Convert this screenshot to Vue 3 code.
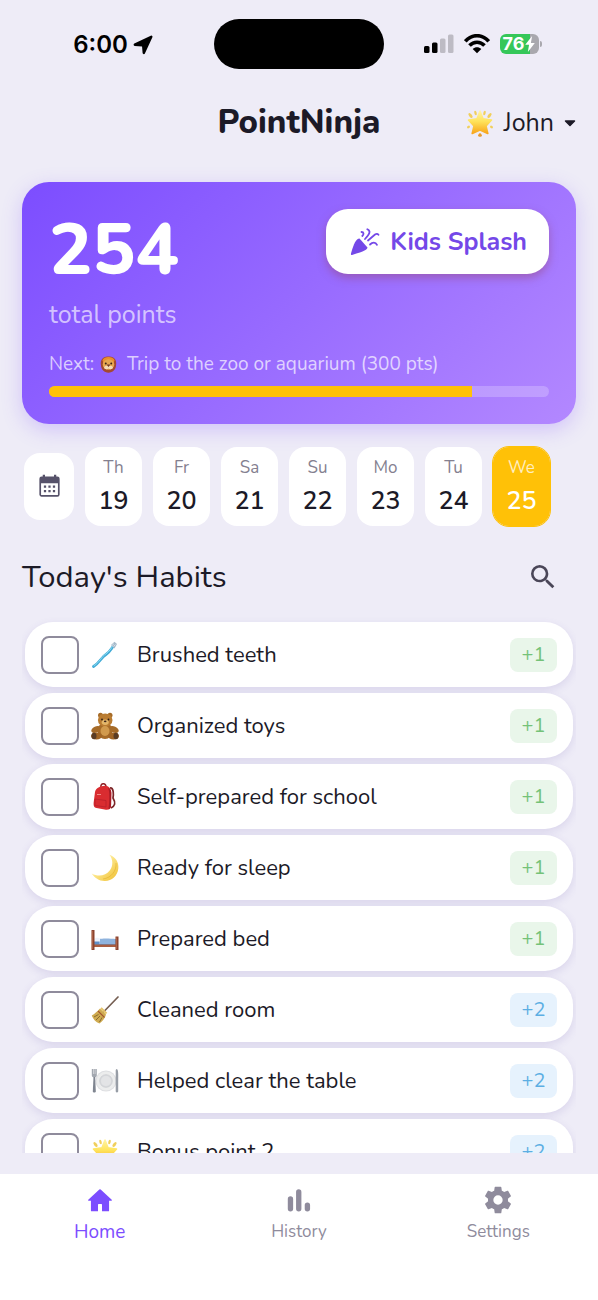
<template>
  <div class="app-screen">
    <svg class="icon-defs" aria-hidden="true">
      <defs>
        <linearGradient id="star-fill" x1="0" y1="0" x2="0" y2="1">
          <stop offset="0" stop-color="#fff3a6" />
          <stop offset="0.45" stop-color="#ffe45c" />
          <stop offset="1" stop-color="#f8a51b" />
        </linearGradient>
        <linearGradient id="moon-fill" x1="0" y1="0" x2="1" y2="1">
          <stop offset="0.3" stop-color="#fff0a0" />
          <stop offset="1" stop-color="#efbd2d" />
        </linearGradient>
      </defs>

      <symbol id="emoji-star" viewBox="0 0 28 28">
        <g fill="#f0cf5c">
          <ellipse cx="9.5" cy="4" rx="1.2" ry="2.3" transform="rotate(-15 9.5 4)" />
          <ellipse cx="18.5" cy="4" rx="1.2" ry="2.3" transform="rotate(15 18.5 4)" />
          <ellipse cx="4.5" cy="6.5" rx="1.4" ry="2.8" transform="rotate(-40 4.5 6.5)" />
          <ellipse cx="23.5" cy="6.5" rx="1.4" ry="2.8" transform="rotate(40 23.5 6.5)" />
          <ellipse cx="2.5" cy="18" rx="1.2" ry="1.6" transform="rotate(60 2.5 18)" />
          <ellipse cx="25.5" cy="18" rx="1.2" ry="1.6" transform="rotate(-60 25.5 18)" />
        </g>
        <path d="M14 2 17 9.8 25.5 11 20 17 21.8 24.5 14 21 6.2 24.5 8 17 2.5 11 11 9.8Z" fill="url(#star-fill)" stroke="url(#star-fill)" stroke-width="1.6" stroke-linejoin="round" />
        <path d="M14 24c1.6 1.2 2.2 2.2 1.9 3-.4.9-3.4.9-3.8 0-.3-.8.3-1.8 1.9-3Z" fill="#e59a2e" />
      </symbol>

      <symbol id="emoji-toothbrush" viewBox="0 0 28 28">
        <path d="M2.5 25.5C9 21.5 10 16.5 15 13.5 19 11 20 8 23.5 3.5" fill="none" stroke="#42abd6" stroke-width="2.8" stroke-linecap="round" />
        <path d="M3 24.7C9 21 10 16 15 12.8 18 11 20 7.5 22.5 4" fill="none" stroke="#8edcf3" stroke-width="1" stroke-linecap="round" />
        <path d="M20 4 23.5.8 26 3 23.5 7.5Z" fill="#a8bac9" />
        <path d="M21 4.5 23 2.7M22.5 5.5 24.5 3.5" stroke="#d8e7f2" stroke-width=".8" />
      </symbol>

      <symbol id="emoji-bear" viewBox="0 0 28 28">
        <g fill="#a66b28">
          <circle cx="9.5" cy="3.3" r="2.5" />
          <circle cx="19" cy="3.3" r="2.5" />
          <ellipse cx="5" cy="17.5" rx="5" ry="3" transform="rotate(-25 5 17.5)" />
          <ellipse cx="23" cy="17.5" rx="5" ry="3" transform="rotate(25 23 17.5)" />
          <ellipse cx="14" cy="19" rx="7.5" ry="8" />
        </g>
        <ellipse cx="14.2" cy="8" rx="7.3" ry="6.6" fill="#ba7c31" />
        <ellipse cx="14.2" cy="10.3" rx="3.5" ry="2.7" fill="#e3b66a" />
        <circle cx="11" cy="7.5" r=".9" fill="#2d1c13" />
        <circle cx="17.5" cy="7.5" r=".9" fill="#2d1c13" />
        <ellipse cx="14.2" cy="9.3" rx="1.3" ry=".9" fill="#3d261a" />
        <ellipse cx="14" cy="19" rx="4.5" ry="5" fill="#d19a4d" />
        <ellipse cx="5.5" cy="24" rx="5.5" ry="3.5" fill="#a16525" />
        <ellipse cx="22.5" cy="24" rx="5.5" ry="3.5" fill="#a16525" />
        <ellipse cx="3" cy="24" rx="2.5" ry="3.2" fill="#5a3c24" />
        <ellipse cx="25" cy="24" rx="2.5" ry="3.2" fill="#5a3c24" />
      </symbol>

      <symbol id="emoji-backpack" viewBox="0 0 28 28">
        <path d="M19 5c4-.5 3.500 7 3 10 3 5 2 8-2 10" fill="none" stroke="#7b2527" stroke-width="1.7" />
        <path d="M10 4C9 0 15-.5 15 3.5" fill="none" stroke="#8f2025" stroke-width="1.5" />
        <path d="M4 9C5 5 9 3 14 2.800c4 .2 6 3 6.300 7L20 23c0 3-2 4-5 3.800L5.500 25C3 24.500 2.500 23 2.600 20Z" fill="#d92c30" />
        <path d="M17 5c2 3 1.500 14 .5 21 2-.5 2.500-2 2.600-4l.2-12c0-3-1-4-3.300-5Z" fill="#a91c26" />
        <path d="M4 16l11 1.500v6.500L4 22.500Z" fill="none" stroke="#b92029" stroke-width=".8" />
        <path d="M6 11.500h4" stroke="#f6a39c" stroke-width=".8" />
      </symbol>

      <symbol id="emoji-moon" viewBox="0 0 28 28">
        <path d="M18.5.7C24.5 3 28 8 27.3 14.5 26.5 22 20.5 27.3 13.5 27 8 26.8 3.5 24 .7 19.5 7 23 14.5 22 18.7 16.5 22.5 11.5 22 5.5 18.5.7Z" fill="url(#moon-fill)" />
        <path d="M25 9c.8 8-5 15-13 16" fill="none" stroke="#dba91f" stroke-width=".8" opacity=".6" />
      </symbol>

      <symbol id="emoji-bed" viewBox="0 0 28 28">
        <path d="M3 14h22v6H3Z" fill="#5f8fc8" />
        <path d="M8 14c4-1 12-.5 16.500 0v5H8Z" fill="#8fb3dd" />
        <path d="M3 14c2-2 5-1.500 6 0v2.500H3Z" fill="#edf2fb" />
        <path d="M2.500 19.500h23V22h-23Z" fill="#a95d40" />
        <path d="M.5 5h3v20h-3ZM24.500 11.500h3V25h-3Z" fill="#8b432f" />
        <path d="M1.300 6v18M25.300 12.500V24" stroke="#c67b59" stroke-width=".7" />
      </symbol>

      <symbol id="emoji-broom" viewBox="0 0 28 28">
        <path d="M27 1 12.500 16" stroke="#755e52" stroke-width="1.700" stroke-linecap="round" />
        <path d="M9 12.500 15 18.500C14 22 12 25 8.500 27.500 4.500 26 2 23 .8 19.500 3.500 18 6 15.500 9 12.500Z" fill="#cfab50" />
        <path d="M7 15 13.500 21.500" stroke="#a25531" stroke-width="1.100" />
        <path d="M7.500 18.500 3 21M9 20 5 24M11 21.500 8.500 26" stroke="#83652a" stroke-width=".9" />
        <path d="m10 12 5.500 5.500" stroke="#e5c368" stroke-width="2" />
      </symbol>

      <symbol id="emoji-plate" viewBox="0 0 28 28">
        <circle cx="15" cy="14" r="10.5" fill="#dedfe2" />
        <circle cx="15" cy="14" r="9.5" fill="#eceded" />
        <circle cx="15" cy="14" r="6.3" fill="#d8dadd" stroke="#c8cace" stroke-width=".7" />
        <circle cx="15" cy="14" r="5" fill="#e3e4e6" />
        <path d="M.8 2h5v6.500c0 2.500-5 2.500-5 0Z" fill="#a3a8b0" />
        <path d="M2.500 2v5M4.100 2v5" stroke="#e8e9eb" stroke-width=".6" />
        <path d="M2.500 10h1.700l.6 14.500c0 1.300-3 1.300-3 0Z" fill="#7f8590" />
        <path d="M25.500 2c1.800 0 2 4 1.700 13v9.500c-.3 1.300-2.200 1.300-2.500 0V3Z" fill="#979da6" />
      </symbol>

      <symbol id="emoji-lion" viewBox="0 0 28 28">
        <path d="M14 1C23 0 28 7 26.5 15 26 23 21 27.5 14 27.5S2 23 1.5 15C0 7 5 0 14 1Z" fill="#a44931" />
        <path d="M4 7C7 0 21 0 24 7l-2 5H6Z" fill="#e98e2d" />
        <ellipse cx="14" cy="14" rx="9.5" ry="8.5" fill="#e6a650" />
        <circle cx="9.5" cy="12.5" r="1.6" fill="#392317" />
        <circle cx="18.5" cy="12.5" r="1.6" fill="#392317" />
        <ellipse cx="10.8" cy="19" rx="4" ry="3" fill="#f4dcb8" />
        <ellipse cx="17.2" cy="19" rx="4" ry="3" fill="#f4dcb8" />
        <path d="M11 14h6l-3 4Z" fill="#70372c" />
      </symbol>
    </svg>

    <div class="status-bar">
      <div class="status-time">
        <span>6:00</span>
        <svg width="20" height="20" viewBox="0 0 20 20" aria-hidden="true">
          <path d="M18.3 1.8 10.8 18 10.2 10.8 9.2 10.2 1.8 9.7Z" fill="#000" stroke="#000" stroke-width="2.4" stroke-linejoin="round" />
        </svg>
      </div>
      <div class="island"></div>
      <div class="status-icons">
        <svg width="30" height="20" viewBox="0 0 30 20" aria-hidden="true">
          <rect x="0" y="12" width="5.5" height="7" rx="1.5" fill="#000" />
          <rect x="8" y="8.5" width="5.500" height="10.5" rx="1.5" fill="#000" />
          <rect x="16" y="4.5" width="5.500" height="14.5" rx="1.5" fill="#bdbbc4" />
          <rect x="24" y="0.5" width="5.500" height="18.5" rx="1.5" fill="#bdbbc4" />
        </svg>
        <svg width="26" height="20" viewBox="0 0 26 20" aria-hidden="true">
          <g fill="none" stroke="#000" stroke-width="3.6">
            <path d="M1.300 7.300C8-.2 18-.2 24.700 7.300" />
            <path d="M5.500 11.600c4.300-4.500 10.700-4.500 15 0" />
          </g>
          <path d="M8.700 14.900c2.500-2.300 6.100-2.300 8.600 0L13 19.300Z" fill="#000" />
        </svg>
        <div class="battery">
          <span>76</span>
          <svg width="10" height="16" viewBox="0 0 9 15" aria-hidden="true">
            <path d="M6.5 0 0 8.3h3.600L2.500 15 9 6.500H5.300Z" fill="#fff" />
          </svg>
        </div>
      </div>
    </div>

    <header class="app-header">
      <h1>PointNinja</h1>
      <button class="profile-btn" type="button">
        <svg class="emoji" aria-hidden="true"><use href="#emoji-star" /></svg>
        <span>John</span>
        <svg class="caret" width="12" height="7" viewBox="0 0 12 7" aria-hidden="true">
          <path d="M1.500 1h9L6 5.500Z" fill="currentColor" stroke="currentColor" stroke-width="1.5" stroke-linejoin="round" />
        </svg>
      </button>
    </header>

    <section class="points-card">
      <div class="points-top">
        <div>
          <div class="points-value">{{ points }}</div>
          <div class="points-label">total points</div>
        </div>
        <button class="splash-btn" type="button">
          <svg width="30" height="28" viewBox="0 0 30 28" aria-hidden="true">
            <path d="M9.500 10.500 17.500 19.500C17.200 21.500 15 23 2 27 1 27 .8 26.500 1 25.500 4 15 6 11 9.500 10.500Z" fill="currentColor" />
            <g fill="none" stroke="currentColor" stroke-width="1.8" stroke-linecap="round">
              <path d="M11.500 4C14 4 14 6.500 12.300 8" />
              <path d="M17.300 1.300C21 3 20 5.500 15 11" />
              <path d="M18 12.500 25 6.500c1.500-1 2.500-1 3.500.3" />
              <path d="M20 16.500c2.500-2.500 5.500-2.500 7 .3" />
            </g>
          </svg>
          <span>Kids Splash</span>
        </button>
      </div>
      <div class="next-reward">
        <span>Next:</span>
        <svg class="emoji" aria-hidden="true"><use href="#emoji-lion" /></svg>
        <span>Trip to the zoo or aquarium ({{ goal }} pts)</span>
      </div>
      <div class="progress-track">
        <div class="progress-fill" :style="{ width: progress + '%' }"></div>
      </div>
    </section>

    <div class="day-strip">
      <button class="calendar-btn" type="button" aria-label="Calendar">
        <svg width="27" height="27" viewBox="0 0 24 24" aria-hidden="true">
          <path fill="currentColor" d="M19,3A2,2 0 0,1 21,5V19A2,2 0 0,1 19,21H5C3.9,21 3,20.1 3,19V5A2,2 0 0,1 5,3H6V1.500H8V3H16V1.500H18V3H19M19.500,19.500V9H4.500V19.500H19.500M7,11H9V13H7ZM11,11H13V13H11ZM15,11H17V13H15ZM7,15H9V17H7ZM11,15H13V17H11ZM15,15H17V17H15Z" />
        </svg>
      </button>
      <button
        v-for="day in days"
        :key="day.date"
        class="day-btn"
        :class="{ 'is-active': day.date === selectedDate }"
        type="button"
        @click="selectedDate = day.date"
      >
        <span class="day-name">{{ day.name }}</span>
        <span class="day-date">{{ day.date }}</span>
      </button>
    </div>

    <div class="section-head">
      <h2>Today's Habits</h2>
      <button class="search-btn" type="button" aria-label="Search">
        <svg width="32" height="32" viewBox="0 0 24 24" aria-hidden="true">
          <path fill="currentColor" d="M9.5,3A6.5,6.5 0 0,1 16,9.5C16,11.11 15.41,12.59 14.44,13.73L14.71,14H15.5L20.5,19L19,20.5L14,15.5V14.71L13.73,14.44C12.59,15.41 11.11,16 9.5,16A6.5,6.5 0 0,1 3,9.5A6.5,6.5 0 0,1 9.5,3M9.5,5C7,5 5,7 5,9.5C5,12 7,14 9.5,14C12,14 14,12 14,9.5C14,7 12,5 9.5,5Z" />
        </svg>
      </button>
    </div>

    <div class="habit-list">
      <label v-for="habit in habits" :key="habit.id" class="habit-row">
        <input v-model="habit.done" type="checkbox" />
        <svg class="emoji" aria-hidden="true"><use :href="'#emoji-' + habit.icon" /></svg>
        <span class="habit-name">{{ habit.name }}</span>
        <span class="habit-points" :class="{ 'is-blue': habit.points > 1 }">+{{ habit.points }}</span>
      </label>
    </div>

    <nav class="tab-bar">
      <a
        v-for="tab in tabs"
        :key="tab.name"
        href="#"
        class="tab"
        :class="{ 'is-active': tab.name === activeTab }"
        @click.prevent="activeTab = tab.name"
      >
        <svg width="32" height="32" viewBox="0 0 24 24" aria-hidden="true">
          <path fill="currentColor" :d="tab.icon" />
        </svg>
        <span>{{ tab.name }}</span>
      </a>
    </nav>
  </div>
</template>

<script setup>
import { ref, computed } from 'vue';

const points = ref(254);
const goal = ref(300);
const progress = computed(() => Math.min(100, (points.value / goal.value) * 100));

const selectedDate = ref(25);
const days = [
  { name: 'Th', date: 19 },
  { name: 'Fr', date: 20 },
  { name: 'Sa', date: 21 },
  { name: 'Su', date: 22 },
  { name: 'Mo', date: 23 },
  { name: 'Tu', date: 24 },
  { name: 'We', date: 25 }
];

const habits = ref([
  { id: 1, icon: 'toothbrush', name: 'Brushed teeth', points: 1, done: false },
  { id: 2, icon: 'bear', name: 'Organized toys', points: 1, done: false },
  { id: 3, icon: 'backpack', name: 'Self-prepared for school', points: 1, done: false },
  { id: 4, icon: 'moon', name: 'Ready for sleep', points: 1, done: false },
  { id: 5, icon: 'bed', name: 'Prepared bed', points: 1, done: false },
  { id: 6, icon: 'broom', name: 'Cleaned room', points: 2, done: false },
  { id: 7, icon: 'plate', name: 'Helped clear the table', points: 2, done: false },
  { id: 8, icon: 'star', name: 'Bonus point 2', points: 2, done: false }
]);

const activeTab = ref('Home');
const tabs = [
  {
    name: 'Home',
    icon: 'M10.5 20.5V15.5Q10.5 15 11 15H13Q13.5 15 13.5 15.5V20.5H18.3Q18.8 20.5 18.8 20V12.5H20.6Q21.3 12.5 20.8 11.9L12.5 4.200Q12 3.8 11.5 4.2L3.2 11.9Q2.7 12.5 3.4 12.5H5.2V20Q5.2 20.5 5.7 20.5Z'
  },
  {
    name: 'History',
    icon: 'M3.6 11.2a2 2 0 0 1 4 0v7.4a2 2 0 0 1-4 0ZM9.8 6a2 2 0 0 1 4 0v12.600a2 2 0 0 1-4 0ZM16.300 15.800a2 2 0 0 1 4 0v2.800a2 2 0 0 1-4 0Z'
  },
  {
    name: 'Settings',
    icon: 'M12,15.5A3.5,3.5 0 0,1 8.5,12A3.5,3.5 0 0,1 12,8.5A3.5,3.5 0 0,1 15.5,12A3.5,3.5 0 0,1 12,15.5M19.43,12.97C19.47,12.65 19.5,12.33 19.5,12C19.5,11.67 19.47,11.34 19.43,11L21.54,9.37C21.73,9.22 21.78,8.95 21.66,8.73L19.66,5.27C19.54,5.05 19.27,4.96 19.05,5.05L16.56,6.05C16.04,5.66 15.5,5.32 14.87,5.07L14.5,2.42C14.46,2.18 14.25,2 14,2H10C9.75,2 9.54,2.18 9.5,2.42L9.13,5.07C8.5,5.32 7.96,5.66 7.44,6.05L4.95,5.05C4.73,4.96 4.46,5.05 4.34,5.27L2.34,8.73C2.21,8.95 2.27,9.22 2.46,9.37L4.57,11C4.53,11.34 4.5,11.67 4.5,12C4.5,12.33 4.53,12.65 4.57,12.97L2.46,14.63C2.27,14.78 2.21,15.05 2.34,15.27L4.34,18.73C4.46,18.95 4.73,19.03 4.95,18.95L7.44,17.94C7.96,18.34 8.5,18.68 9.13,18.93L9.5,21.58C9.54,21.82 9.75,22 10,22H14C14.25,22 14.46,21.82 14.5,21.58L14.87,18.93C15.5,18.67 16.04,18.34 16.56,17.94L19.05,18.95C19.27,19.03 19.54,18.95 19.66,18.73L21.66,15.27C21.78,15.05 21.73,14.78 21.54,14.63L19.43,12.97Z'
  }
];
</script>

<style>
body {
  margin: 0;
  background-color: #eeecf7;
}
</style>

<style scoped>
.app-screen {
  height: 100vh;
  display: flex;
  flex-direction: column;
  background-color: #eeecf7;
  color: #1c1a27;
  font-family: Nunito, 'Open Sans', 'Noto Sans', sans-serif;
}

.app-screen > * {
  flex-shrink: 0;
}

.icon-defs {
  position: absolute;
  width: 0;
  height: 0;
}

button {
  margin: 0;
  padding: 0;
  border: none;
  background: none;
  color: inherit;
  font: inherit;
  cursor: pointer;
}

.emoji {
  width: 28px;
  height: 28px;
  flex-shrink: 0;
}

/* 状态栏 */
.status-bar {
  display: grid;
  grid-template-columns: 1fr 170px 1fr;
  align-items: center;
  padding-top: 19px;
  color: #000;
}

.island {
  height: 50px;
  border-radius: 25px;
  background-color: #000;
}

.status-time {
  display: flex;
  align-items: center;
  justify-content: center;
  gap: 5px;
  padding: 2px 0 0 12px;
  font-family: Inter, sans-serif;
  font-size: 24px;
  font-weight: 600;
  line-height: 28px;
}

.status-icons {
  display: flex;
  align-items: center;
  justify-content: center;
  gap: 10px;
  padding-right: 20px;
}

.status-icons > svg {
  flex-shrink: 0;
}

.battery {
  position: relative;
  width: 39px;
  height: 20px;
  display: flex;
  align-items: center;
  justify-content: center;
  gap: 1px;
  border-radius: 6px;
  background: linear-gradient(90deg, #35c759 76%, #a9a8ae 76%);
  color: #fff;
  font-family: Inter, sans-serif;
  font-size: 18px;
  font-weight: 700;
  line-height: 20px;
}

.battery::after {
  content: '';
  position: absolute;
  left: 40px;
  top: 7px;
  width: 2px;
  height: 6px;
  border-radius: 0 2px 2px 0;
  background-color: #a9a8ae;
}

/* 顶部标题 */
.app-header {
  display: grid;
  grid-template-columns: 1fr auto 1fr;
  align-items: center;
  padding: 30px 22px 35px;
}

.app-header h1 {
  grid-column: 2;
  margin: 0;
  font-size: 33px;
  font-weight: 800;
  line-height: 48px;
}

.profile-btn {
  justify-self: end;
  display: flex;
  align-items: center;
  gap: 10px;
  font-size: 25px;
  line-height: 32px;
}

/* 积分卡片 */
.points-card {
  margin: 0 22px;
  padding: 27px;
  border-radius: 27px;
  background: linear-gradient(135deg, #7c4dff, #b388ff);
  box-shadow: 0 6px 20px rgba(124, 77, 255, 0.25);
  color: #fff;
}

.points-top {
  display: flex;
  align-items: flex-start;
  justify-content: space-between;
}

.points-value {
  font-size: 72px;
  font-weight: 800;
  line-height: 82px;
}

.points-label {
  margin-top: 8px;
  font-size: 25px;
  line-height: 32px;
  color: rgba(255, 255, 255, 0.65);
}

.splash-btn {
  height: 65px;
  display: flex;
  align-items: center;
  gap: 10px;
  padding: 0 22px 0 24px;
  border-radius: 22px;
  background-color: #fff;
  box-shadow: 0 4px 8px rgba(150, 70, 120, 0.5);
  color: #7448e8;
  font-size: 25px;
  font-weight: 700;
  white-space: nowrap;
}

.next-reward {
  display: flex;
  align-items: center;
  gap: 6px;
  margin-top: 20px;
  font-size: 19px;
  line-height: 27px;
  color: rgba(255, 255, 255, 0.7);
}

.next-reward .emoji {
  width: 17px;
  height: 17px;
  margin-right: 4px;
}

.progress-track {
  height: 11px;
  margin-top: 8px;
  border-radius: 6px;
  background-color: rgba(255, 255, 255, 0.22);
  overflow: hidden;
}

.progress-fill {
  height: 100%;
  background-color: #ffc107;
}

/* 日期选择 */
.day-strip {
  display: flex;
  align-items: center;
  gap: 9px;
  padding: 22px 22px 0 23px;
}

.calendar-btn,
.day-btn {
  box-sizing: border-box;
  border: 1px solid transparent;
  border-radius: 17px;
  background-color: #fff;
  background-clip: padding-box;
}

.calendar-btn {
  width: 52px;
  height: 69px;
  display: flex;
  align-items: center;
  justify-content: center;
  color: #56526a;
}

.day-btn {
  width: 59px;
  height: 81px;
  display: flex;
  flex-direction: column;
  align-items: center;
  justify-content: center;
  gap: 6px;
}

.day-name {
  font-size: 17px;
  line-height: 22px;
  color: #84808f;
}

.day-date {
  font-size: 25px;
  font-weight: 600;
  line-height: 32px;
}

.day-btn.is-active {
  border-color: #ffc107;
  background-color: #ffc107;
  color: #fff;
}

.day-btn.is-active .day-name {
  color: rgba(255, 255, 255, 0.75);
}

.section-head {
  display: flex;
  align-items: center;
  justify-content: space-between;
  padding: 30px 39px 18px 22px;
}

.section-head h2 {
  margin: 0;
  font-size: 31px;
  font-weight: 400;
  line-height: 40px;
}

.search-btn {
  height: 32px;
  color: #4a4658;
}

/* 习惯列表 */
.app-screen > .habit-list {
  flex: 1 1 0;
  min-height: 0;
  display: flex;
  flex-direction: column;
  gap: 6px;
  margin: 0 22px 21px;
  padding: 7px 3px 0;
  overflow-y: auto;
  scrollbar-width: none;
}

.habit-row {
  height: 65px;
  flex-shrink: 0;
  display: flex;
  align-items: center;
  padding: 0 16px;
  border-radius: 28px;
  background-color: #fff;
  box-shadow: 0 3px 9px rgba(90, 70, 170, 0.14);
}

.habit-row input {
  appearance: none;
  box-sizing: border-box;
  width: 38px;
  height: 38px;
  flex-shrink: 0;
  margin: 0 12px 0 0;
  border: 2px solid #8f8b9c;
  border-radius: 8px;
  cursor: pointer;
}

.habit-row input:checked {
  border-color: #7c4dff;
  background-color: #7c4dff;
}

.habit-name {
  flex: 1;
  margin-left: 18px;
  font-size: 22px;
  line-height: 30px;
}

.habit-points {
  width: 47px;
  border-radius: 8px;
  background-color: #e9f6ea;
  color: #74c278;
  font-size: 20px;
  line-height: 34px;
  text-align: center;
}

.habit-points.is-blue {
  background-color: #e6f2fd;
  color: #5caee3;
}

/* 底部导航 */
.tab-bar {
  box-sizing: border-box;
  height: 126px;
  display: grid;
  grid-template-columns: repeat(3, 1fr);
  padding-top: 10px;
  background-color: #fff;
}

.tab {
  display: flex;
  flex-direction: column;
  align-items: center;
  gap: 4px;
  color: #8f8b9c;
  font-size: 17px;
  line-height: 24px;
  text-decoration: none;
}

.tab.is-active {
  color: #7c4dff;
  font-size: 19px;
}
</style>
